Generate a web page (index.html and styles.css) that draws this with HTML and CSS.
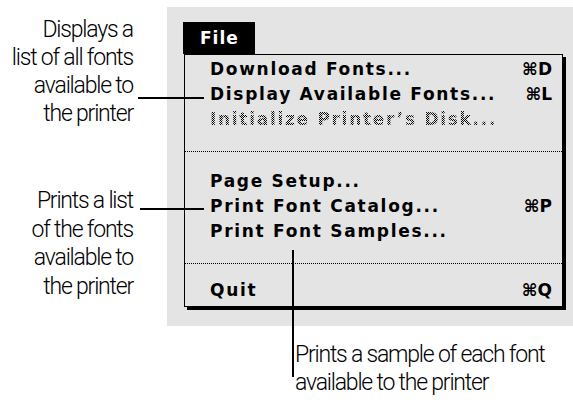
FILE: index.html
```html
<!DOCTYPE html>
<html>
<head>
<meta charset="utf-8">
<link rel="stylesheet" href="styles.css">
</head>
<body>
<div class="figure">
  <div class="notes">
    <p class="note note-display">Displays a<br>list of all fonts<br>available to<br>the printer</p>
    <p class="note note-catalog">Prints a list<br>of the fonts<br>available to<br>the printer</p>
  </div>
  <div class="panel">
    <div class="title">File</div>
    <div class="menu">
      <div class="item"><span>Download Fonts...</span><span class="key">⌘D</span></div>
      <div class="item"><span>Display Available Fonts...</span><span class="key">⌘L</span></div>
      <div class="item disabled"><span>Initialize Printer’s Disk...</span></div>
      <div class="sep sep-1"></div>
      <div class="item"><span>Page Setup...</span></div>
      <div class="item"><span>Print Font Catalog...</span><span class="key">⌘P</span></div>
      <div class="item"><span>Print Font Samples...</span></div>
      <div class="sep sep-2"></div>
      <div class="item"><span>Quit</span><span class="key">⌘Q</span></div>
    </div>
  </div>
  <div class="spacer"></div>
  <p class="note note-samples">Prints a sample of each font<br>available to the printer</p>

  <div class="leader leader-display"></div>
  <div class="leader leader-catalog"></div>
  <div class="leader leader-samples"></div>
</div>
</body>
</html>
```

FILE: styles.css
```css
html, body {
  margin: 0;
  padding: 0;
  background: #fff;
}

.figure {
  position: relative;
  width: 573px;
  height: 410px;
  display: grid;
  grid-template-columns: 167px 406px;
  grid-template-rows: 326px 84px;
  overflow: hidden;
}

.notes {
  display: flex;
  flex-direction: column;
  align-items: flex-end;
  padding-right: 34px;
}

.note {
  margin: 0;
  font-family: Roboto, "Liberation Sans", sans-serif;
  font-weight: 300;
  font-size: 23px;
  letter-spacing: -1.2px;
  line-height: 28px;
  color: #000;
  text-align: right;
}

.note-display {
  margin-top: 16px;
}

.note-catalog {
  margin-top: 59px;
  line-height: 28.7px;
}

.note-samples {
  text-align: left;
  padding-left: 128px;
  padding-top: 15px;
}

.panel {
  margin-top: 7px;
  background: #e4e4e4;
  padding: 15px 0 0 16px;
}

.title {
  width: 72px;
  height: 32px;
  box-sizing: border-box;
  background: #000;
  color: #fff;
  font-family: "DejaVu Sans", sans-serif;
  font-weight: bold;
  font-size: 17px;
  line-height: 32px;
  padding-left: 17px;
  letter-spacing: 1px;
}

.menu {
  margin-left: 1px;
  width: 379px;
  height: 253px;
  box-sizing: border-box;
  border: 1px solid #000;
  box-shadow: 3px 3px 0 #000;
  padding-top: 2px;
  font-family: "DejaVu Sans", sans-serif;
  font-weight: bold;
  font-size: 17px;
  letter-spacing: 1.7px;
  color: #000;
}

.item {
  display: flex;
  justify-content: space-between;
  height: 25px;
  line-height: 25px;
  padding: 0 10px 0 25px;
  white-space: nowrap;
}

.key {
  letter-spacing: 0;
}

.disabled span {
  color: transparent;
  background-image: repeating-conic-gradient(#000 0% 25%, #e4e4e4 0% 50%);
  background-size: 2px 2px;
  -webkit-background-clip: text;
  background-clip: text;
}

.sep {
  height: 1px;
  background-image: linear-gradient(to right, #000 50%, transparent 50%);
  background-size: 2px 1px;
}

.sep-1 {
  margin: 19px 0 17px;
}

.sep-2 {
  margin: 19px 0 14px;
}

.leader {
  position: absolute;
  background: #000;
}

.leader-display {
  left: 138px;
  top: 97px;
  width: 66px;
  height: 2px;
}

.leader-catalog {
  left: 140px;
  top: 208px;
  width: 64px;
  height: 2px;
}

.leader-samples {
  left: 292px;
  top: 250px;
  width: 2px;
  height: 127px;
}
```
